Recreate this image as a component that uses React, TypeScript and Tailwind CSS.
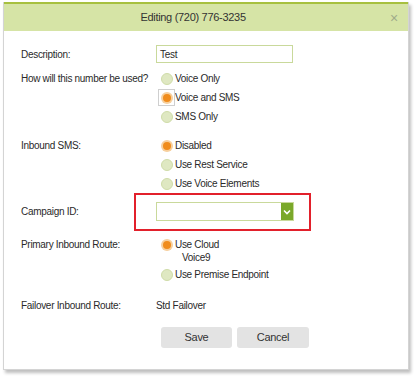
import React from "react";

function Radio({ checked = false, focused = false }: { checked?: boolean; focused?: boolean }) {
  return (
    <span className="relative flex h-[13px] w-[13px] shrink-0 items-center justify-center">
      {focused && <span className="absolute -inset-[2px] border border-[#cfcfcf]" />}
      {checked ? (
        <span className="flex h-[12px] w-[12px] items-center justify-center rounded-full bg-[#f7cf9c]">
          <span className="h-[8px] w-[8px] rounded-full bg-[#f08c1c]" />
        </span>
      ) : (
        <span className="h-[12px] w-[12px] rounded-full border border-[#cfdca8] bg-[#dfe8c2]" />
      )}
    </span>
  );
}

function Option({ label, checked, focused }: { label: string; checked?: boolean; focused?: boolean }) {
  return (
    <div className="flex h-[19px] items-center gap-[2px]">
      <Radio checked={checked} focused={focused} />
      <span>{label}</span>
    </div>
  );
}

export default function App() {
  return (
    <div className="h-[380px] w-[418px] whitespace-nowrap bg-white pl-[3px] pt-[2px] font-['Liberation_Sans',sans-serif] text-[10px] tracking-[-0.3px] text-[#2a2a2a]">
      <div className="flex h-[368px] w-[406px] flex-col border border-t-0 border-[#d4d4d4] bg-white shadow-[2px_3px_3px_rgba(0,0,0,0.25)]">
        {/* Header */}
        <div className="flex h-[29px] items-center border-t-[2px] border-[#a7c03f] bg-[#d6e4a6] pl-[6px] pr-[10px]">
          <div className="flex-1 pr-[14px] text-center text-[11px] text-[#333]">Editing (720) 776-3235</div>
          <span className="text-[14px] leading-none text-[#a0ab8a]">×</span>
        </div>

        <div className="flex flex-col pl-[17px]">
          {/* Description */}
          <div className="mt-[14px] flex h-[18px] items-center">
            <div className="w-[135px]">Description:</div>
            <div className="flex h-[18px] w-[137px] items-center border border-[#c9d99b] px-[3px]">Test</div>
          </div>

          {/* Usage */}
          <div className="mt-[6px] flex">
            <div className="flex h-[19px] w-[139px] items-center">How will this number be used?</div>
            <div className="flex flex-col">
              <Option label="Voice Only" />
              <Option label="Voice and SMS" checked focused />
              <Option label="SMS Only" />
            </div>
          </div>

          {/* Inbound SMS */}
          <div className="mt-[10px] flex">
            <div className="flex h-[19px] w-[139px] items-center">Inbound SMS:</div>
            <div className="flex flex-col">
              <Option label="Disabled" checked />
              <Option label="Use Rest Service" />
              <Option label="Use Voice Elements" />
            </div>
          </div>

          {/* Campaign ID */}
          <div className="relative mt-[9px] flex h-[19px] items-center">
            <div className="w-[135px]">Campaign ID:</div>
            <div className="flex h-[19px] w-[138px] items-stretch border border-[#c9d99b] bg-white">
              <div className="flex-1" />
              <div className="flex w-[12px] items-center justify-center bg-[#7aa82a]">
                <svg width="8" height="6" viewBox="0 0 8 6">
                  <path d="M1 1.5 L4 4.5 L7 1.5" fill="none" stroke="white" strokeWidth="1.6" />
                </svg>
              </div>
            </div>
            <div className="absolute left-[113px] top-[-9px] h-[38px] w-[177px] border-2 border-[#e2202b]" />
          </div>

          {/* Primary Inbound Route */}
          <div className="mt-[14px] flex">
            <div className="flex h-[19px] w-[139px] items-center">Primary Inbound Route:</div>
            <div className="flex flex-col">
              <Option label="Use Cloud" checked />
              <div className="-mt-[3px] pl-[22px] leading-[14px]">Voice9</div>
              <Option label="Use Premise Endpoint" />
            </div>
          </div>

          {/* Failover */}
          <div className="mt-[12px] flex h-[19px] items-center">
            <div className="w-[135px]">Failover Inbound Route:</div>
            <div>Std Failover</div>
          </div>

          {/* Buttons */}
          <div className="mt-[12px] flex gap-[5px] pl-[140px]">
            <button className="h-[21px] w-[71px] rounded-[3px] bg-[#e3e3e3] text-[11px] text-[#333]">Save</button>
            <button className="h-[21px] w-[72px] rounded-[3px] bg-[#e3e3e3] text-[11px] text-[#333]">Cancel</button>
          </div>
        </div>
      </div>
    </div>
  );
}
